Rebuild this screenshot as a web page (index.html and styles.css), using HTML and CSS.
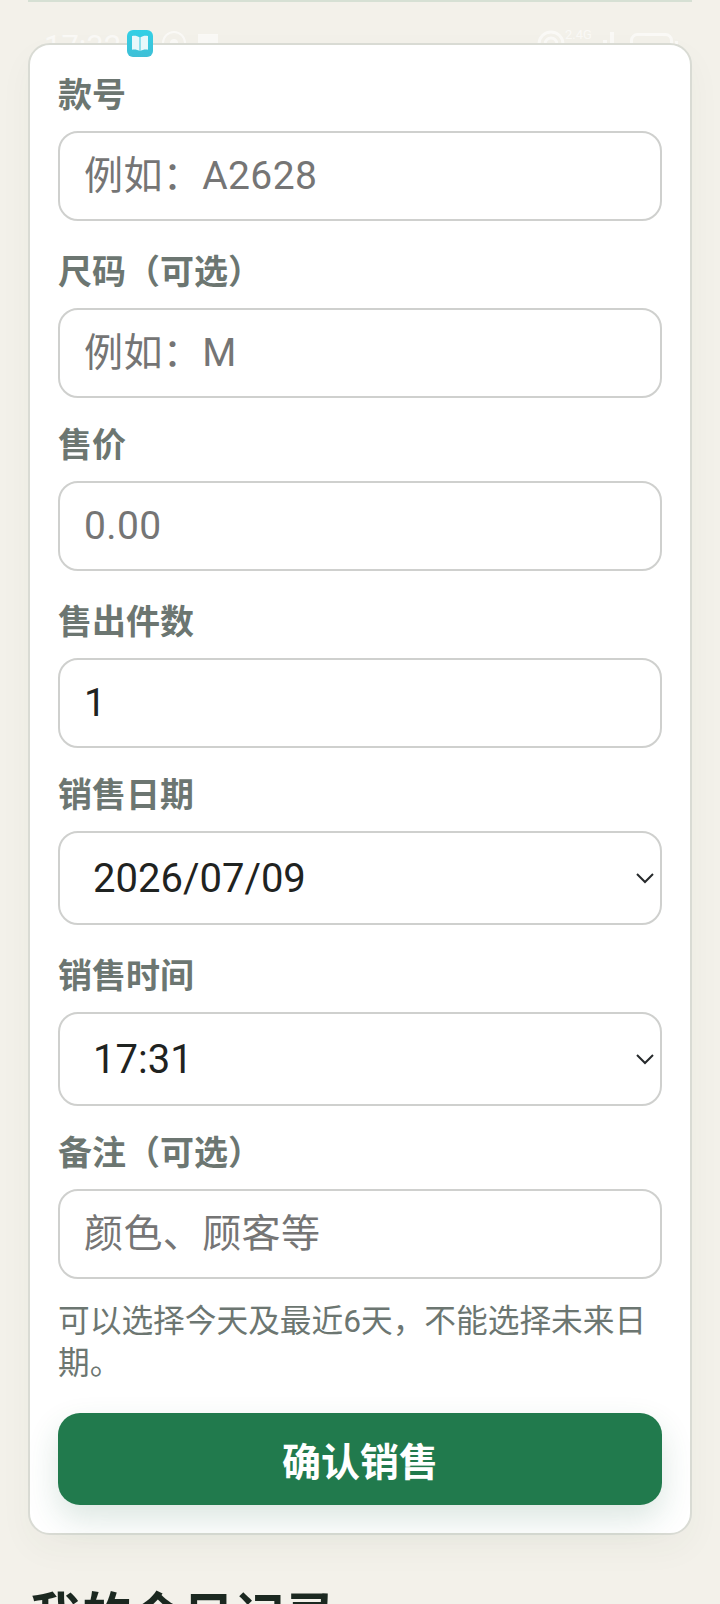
FILE: index.html
```html
<!DOCTYPE html>
<html lang="zh">
    <head>
        <title>确认销售</title>
        <link rel="stylesheet" href="styles.css">
    </head>
    <body>
        <div class="page">
            <div class="prevCard"></div>

            <div class="statusGhost">
                <span class="statusTime">17:32</span>
                <svg class="ghostEye" viewBox="0 0 26 26" width="26" height="26">
                    <circle cx="13" cy="13" r="11" fill="none" stroke="#fff" stroke-width="2"/>
                    <circle cx="13" cy="13" r="4" fill="#fff"/>
                </svg>
                <svg class="ghostShield" viewBox="0 0 24 24" width="24" height="24">
                    <path d="M2 3h20v12l-10 8-10-8z" fill="#fff"/>
                </svg>
                <svg class="ghostWifi" viewBox="0 0 28 28" width="28" height="28">
                    <circle cx="14" cy="14" r="12" fill="none" stroke="#fff" stroke-width="3"/>
                    <circle cx="14" cy="14" r="6" fill="none" stroke="#fff" stroke-width="3"/>
                </svg>
                <span class="ghostNet">2.4G</span>
                <svg class="ghostBars" viewBox="0 0 22 20" width="22" height="20">
                    <path d="M2 14h4v6H2zM9 8h4v12H9zM16 0h4v20h-4z" fill="#fff"/>
                </svg>
                <svg class="ghostBattery" viewBox="0 0 48 26" width="48" height="26">
                    <rect x="1.5" y="1.5" width="40" height="23" rx="6" fill="none" stroke="#fff" stroke-width="3"/>
                    <rect x="45" y="8" width="3" height="10" fill="#fff"/>
                </svg>
            </div>

            <svg class="bookIcon" viewBox="0 0 26 27" width="26" height="27">
                <defs>
                    <linearGradient id="bookBg" x1="0" y1="0" x2="0" y2="1">
                        <stop offset="0" stop-color="#32d0e6"/>
                        <stop offset="1" stop-color="#3fbfd6"/>
                    </linearGradient>
                </defs>
                <rect width="26" height="27" rx="6" fill="url(#bookBg)"/>
                <path d="M5 6c3-.6 5.500 0 7.500 1.300V21c-2-1.300-4.500-1.800-7.500-1.300z" fill="#e8f8fb"/>
                <path d="M21 6c-3-.6-5.500 0-7.500 1.300V21c2-1.300 4.500-1.800 7.500-1.300z" fill="#e8f8fb"/>
            </svg>

            <form class="saleCard">
                <label class="fieldLabel">款号</label>
                <input class="textInput" type="text" placeholder="例如：A2628">

                <label class="fieldLabel">尺码（可选）</label>
                <input class="textInput" type="text" placeholder="例如：M">

                <label class="fieldLabel fieldTight">售价</label>
                <input class="textInput" type="text" placeholder="0.00">

                <label class="fieldLabel">售出件数</label>
                <input class="textInput" type="text" value="1">

                <label class="fieldLabel fieldTight">销售日期</label>
                <div class="selectWrap">
                    <select class="selectInput">
                        <option>2026/07/09</option>
                    </select>
                    <svg class="chevron" viewBox="0 0 18 11" width="18" height="11">
                        <path d="M1 1l8 8 8-8" fill="none" stroke="#26292b" stroke-width="2"/>
                    </svg>
                </div>

                <label class="fieldLabel">销售时间</label>
                <div class="selectWrap">
                    <select class="selectInput">
                        <option>17:31</option>
                    </select>
                    <svg class="chevron" viewBox="0 0 18 11" width="18" height="11">
                        <path d="M1 1l8 8 8-8" fill="none" stroke="#26292b" stroke-width="2"/>
                    </svg>
                </div>

                <label class="fieldLabel fieldTight">备注（可选）</label>
                <input class="textInput" type="text" placeholder="颜色、顾客等">

                <p class="hint">可以选择今天及最近6天，不能选择未来日期。</p>

                <button class="submitBtn" type="button">确认销售</button>
            </form>

            <h2 class="recordsTitle">我的今日记录</h2>
        </div>
    </body>
</html>
```

FILE: styles.css
```css
html, body {
    margin: 0;
    height: 1604px;
    overflow: hidden;
    background-color: #f3f1ea;
    font-family: Roboto, "Noto Sans CJK SC", sans-serif;
}
.page {
    position: relative;
    height: 100%;
    padding: 0 28px;
}
.prevCard {
    height: 2px;
    background-color: #d6e0d4;
}
.statusGhost {
    position: absolute;
    top: 0;
    left: 0;
    width: 100%;
    height: 60px;
    opacity: 0.6;
}
.statusGhost svg, .statusGhost span {
    position: absolute;
}
.statusTime {
    left: 44px;
    top: 28px;
    font-size: 31px;
    color: #fff;
}
.ghostEye {
    left: 161px;
    top: 30px;
}
.ghostShield {
    left: 196px;
    top: 31px;
}
.ghostWifi {
    left: 537px;
    top: 30px;
}
.ghostNet {
    left: 565px;
    top: 27px;
    font-size: 13px;
    color: #fff;
}
.ghostBars {
    left: 594px;
    top: 32px;
}
.ghostBattery {
    left: 630px;
    top: 33px;
}
.bookIcon {
    position: absolute;
    left: 127px;
    top: 30px;
    z-index: 2;
}
.saleCard {
    position: relative;
    z-index: 1;
    box-sizing: border-box;
    margin-top: 41px;
    height: 1492px;
    padding: 27px 28px 0;
    background-color: #fff;
    border: 2px solid #d9dbd4;
    border-radius: 22px;
    box-shadow: 0 14px 34px rgba(40, 80, 60, 0.04);
}
.fieldLabel {
    display: block;
    margin: 28px 0 13px;
    font-size: 34px;
    line-height: 46px;
    font-weight: 700;
    color: #6c7671;
}
.fieldLabel:first-child {
    margin-top: 0;
}
.fieldTight {
    margin-top: 24px;
}
.textInput, .selectInput {
    display: block;
    box-sizing: border-box;
    width: 100%;
    margin: 0;
    height: 90px;
    padding: 0 24px;
    font-family: Roboto, "Noto Sans CJK SC", sans-serif;
    font-size: 39px;
    letter-spacing: 0.4px;
    color: #1f2321;
    background-color: #fff;
    border: 2px solid #cfd0ce;
    border-radius: 20px;
    outline: none;
}
.textInput::placeholder {
    color: #757575;
    opacity: 1;
}
.selectWrap {
    position: relative;
}
.selectInput {
    height: 94px;
    padding: 0 33px;
    font-size: 40px;
    letter-spacing: 0;
    appearance: none;
}
.chevron {
    position: absolute;
    right: 8px;
    top: 42px;
}
.hint {
    margin: 22px 0 0;
    font-size: 31.7px;
    line-height: 42px;
    color: #6c7671;
}
.submitBtn {
    display: block;
    width: 100%;
    height: 92px;
    margin-top: 28px;
    border: none;
    border-radius: 22px;
    font-family: Roboto, "Noto Sans CJK SC", sans-serif;
    font-size: 39px;
    font-weight: 700;
    color: #fff;
    background-color: #217a4d;
    box-shadow: 0 14px 32px rgba(33, 100, 70, 0.16);
}
.recordsTitle {
    margin: 48px 0 0 2px;
    font-size: 51px;
    line-height: 70px;
    font-weight: 700;
    color: #1b2820;
}
```
